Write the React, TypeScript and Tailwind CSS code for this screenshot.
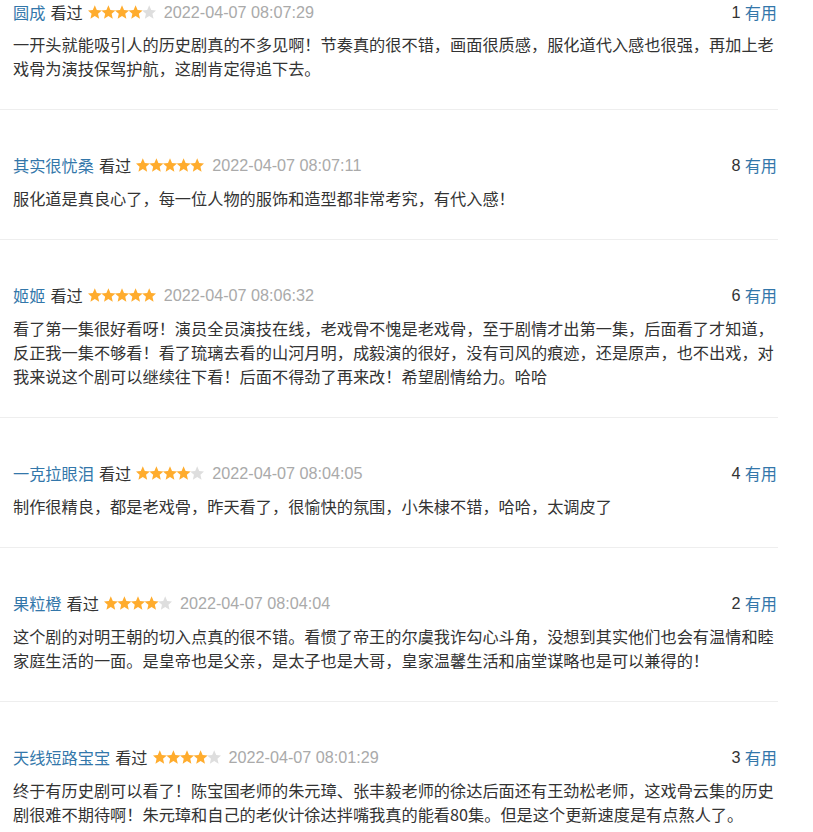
import React from "react";

interface Review {
  name: string;
  stars: number;
  time: string;
  votes: number;
  text: string;
}

const reviews: Review[] = [
  {
    name: "圆成",
    stars: 4,
    time: "2022-04-07 08:07:29",
    votes: 1,
    text: "一开头就能吸引人的历史剧真的不多见啊！节奏真的很不错，画面很质感，服化道代入感也很强，再加上老戏骨为演技保驾护航，这剧肯定得追下去。",
  },
  {
    name: "其实很忧桑",
    stars: 5,
    time: "2022-04-07 08:07:11",
    votes: 8,
    text: "服化道是真良心了，每一位人物的服饰和造型都非常考究，有代入感！",
  },
  {
    name: "姬姬",
    stars: 5,
    time: "2022-04-07 08:06:32",
    votes: 6,
    text: "看了第一集很好看呀！演员全员演技在线，老戏骨不愧是老戏骨，至于剧情才出第一集，后面看了才知道，反正我一集不够看！看了琉璃去看的山河月明，成毅演的很好，没有司风的痕迹，还是原声，也不出戏，对我来说这个剧可以继续往下看！后面不得劲了再来改！希望剧情给力。哈哈",
  },
  {
    name: "一克拉眼泪",
    stars: 4,
    time: "2022-04-07 08:04:05",
    votes: 4,
    text: "制作很精良，都是老戏骨，昨天看了，很愉快的氛围，小朱棣不错，哈哈，太调皮了",
  },
  {
    name: "果粒橙",
    stars: 4,
    time: "2022-04-07 08:04:04",
    votes: 2,
    text: "这个剧的对明王朝的切入点真的很不错。看惯了帝王的尔虞我诈勾心斗角，没想到其实他们也会有温情和睦家庭生活的一面。是皇帝也是父亲，是太子也是大哥，皇家温馨生活和庙堂谋略也是可以兼得的！",
  },
  {
    name: "天线短路宝宝",
    stars: 4,
    time: "2022-04-07 08:01:29",
    votes: 3,
    text: "终于有历史剧可以看了！陈宝国老师的朱元璋、张丰毅老师的徐达后面还有王劲松老师，这戏骨云集的历史剧很难不期待啊！朱元璋和自己的老伙计徐达拌嘴我真的能看80集。但是这个更新速度是有点熬人了。",
  },
];

function starPoints(cx: number, cy: number, r: number) {
  const pts: string[] = [];
  for (let i = 0; i < 10; i++) {
    const rad = i % 2 === 0 ? r : r * 0.46;
    const a = -Math.PI / 2 + (i * Math.PI) / 5;
    pts.push(`${(cx + rad * Math.cos(a)).toFixed(2)},${(cy + rad * Math.sin(a)).toFixed(2)}`);
  }
  return pts.join(" ");
}

function Stars({ n }: { n: number }) {
  return (
    <svg width="68" height="14" viewBox="0 0 68 14" className="shrink-0">
      {[0, 1, 2, 3, 4].map((i) => (
        <polygon key={i} points={starPoints(6.8 + i * 13.6, 7.7, 7.4)} fill={i < n ? "#ffac2d" : "#dedede"} />
      ))}
    </svg>
  );
}

function ReviewItem({ r, first }: { r: Review; first: boolean }) {
  return (
    <div className={`border-b border-[#eeeeee] pb-[29px] ${first ? "pt-0" : "pt-[43px]"}`}>
      <div className="flex items-center justify-between pl-[13px] pr-[1px] h-[24px] text-[16.2px]">
        <div className="flex items-center">
          <span className="text-[#3377aa]">{r.name}</span>
          <span className="ml-[5px] text-[#333333]">看过</span>
          <span className="ml-[5px]">
            <Stars n={r.stars} />
          </span>
          <span className="ml-[8px] text-[#aaaaaa] font-['Liberation_Sans']">{r.time}</span>
        </div>
        <div className="flex items-center">
          <span className="text-[#333333] font-['Liberation_Sans']">{r.votes}</span>
          <span className="ml-[4px] text-[#3377aa]">有用</span>
        </div>
      </div>
      <p className={`pl-[13px] text-[16.2px] leading-[24px] text-[#333333] ${first ? "mt-[8px]" : "mt-[9px]"}`}>{r.text}</p>
    </div>
  );
}

export default function App() {
  return (
    <div className="w-[813px] h-[832px] overflow-hidden bg-white font-['Noto_Sans_CJK_SC','Noto_Sans',sans-serif]">
      <div className="w-[778px]">
        {reviews.map((r, i) => (
          <ReviewItem key={i} r={r} first={i === 0} />
        ))}
      </div>
    </div>
  );
}
